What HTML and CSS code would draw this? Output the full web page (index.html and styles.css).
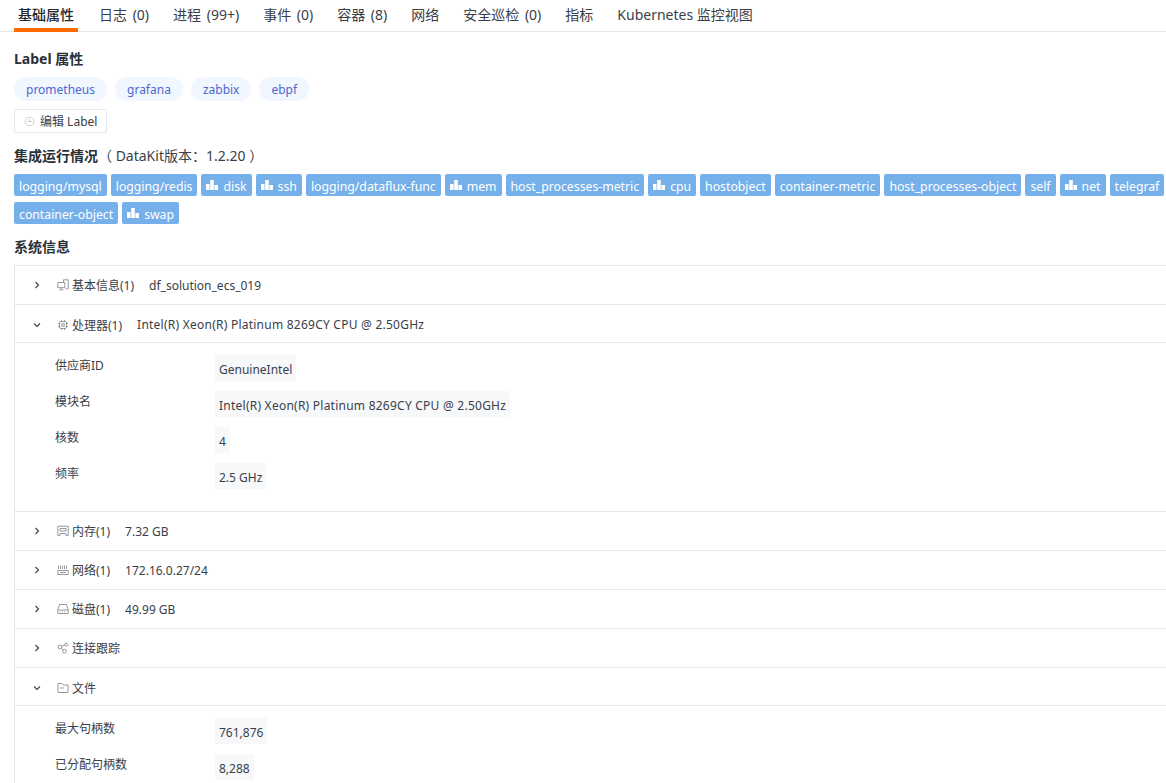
FILE: index.html
```html
<!DOCTYPE html>
<html lang="zh-CN">
<head>
    <meta charset="UTF-8">
    <meta name="viewport" content="width=device-width, initial-scale=1.0">
    <title>基础属性</title>
    <link rel="stylesheet" href="styles.css">
</head>
<body>
    <nav class="tabs">
        <a class="tab active">基础属性</a>
        <a class="tab tab-count">日志 (0)</a>
        <a class="tab tab-count">进程 (99+)</a>
        <a class="tab tab-count">事件 (0)</a>
        <a class="tab tab-count">容器 (8)</a>
        <a class="tab">网络</a>
        <a class="tab tab-count">安全巡检 (0)</a>
        <a class="tab">指标</a>
        <a class="tab">Kubernetes 监控视图</a>
    </nav>

    <main class="content">
        <h3 class="title title-label">Label 属性</h3>
        <div class="labels">
            <span class="label">prometheus</span>
            <span class="label">grafana</span>
            <span class="label">zabbix</span>
            <span class="label">ebpf</span>
        </div>
        <button class="edit-label">
            <svg class="edit-icon" viewBox="0 0 12 12"><circle cx="6" cy="6" r="4.800"/><path d="M3.600 6h4.800M6 3.600v2.400"/></svg>
            编辑 Label
        </button>

        <h3 class="title title-run">集成运行情况<span class="version">（ DataKit版本：1.2.20 ）</span></h3>
        <div class="inputs">
            <span class="input">logging/mysql</span>
            <span class="input">logging/redis</span>
            <span class="input"><svg class="bars" viewBox="0 0 12 12"><path d="M0 5h3.600v6H0zM4.200 1h3.600v10H4.200zM8.400 6H12v5H8.400z"/></svg>disk</span>
            <span class="input"><svg class="bars" viewBox="0 0 12 12"><path d="M0 5h3.600v6H0zM4.200 1h3.600v10H4.200zM8.400 6H12v5H8.400z"/></svg>ssh</span>
            <span class="input">logging/dataflux-func</span>
            <span class="input"><svg class="bars" viewBox="0 0 12 12"><path d="M0 5h3.600v6H0zM4.200 1h3.600v10H4.200zM8.400 6H12v5H8.400z"/></svg>mem</span>
            <span class="input">host_processes-metric</span>
            <span class="input"><svg class="bars" viewBox="0 0 12 12"><path d="M0 5h3.600v6H0zM4.200 1h3.600v10H4.200zM8.400 6H12v5H8.400z"/></svg>cpu</span>
            <span class="input">hostobject</span>
            <span class="input">container-metric</span>
            <span class="input">host_processes-object</span>
            <span class="input">self</span>
            <span class="input"><svg class="bars" viewBox="0 0 12 12"><path d="M0 5h3.600v6H0zM4.200 1h3.600v10H4.200zM8.400 6H12v5H8.400z"/></svg>net</span>
            <span class="input">telegraf</span>
            <span class="input">container-object</span>
            <span class="input"><svg class="bars" viewBox="0 0 12 12"><path d="M0 5h3.600v6H0zM4.200 1h3.600v10H4.200zM8.400 6H12v5H8.400z"/></svg>swap</span>
        </div>

        <h3 class="title title-sys">系统信息</h3>
        <section class="panel">
            <div class="row">
                <svg class="caret" viewBox="0 0 8 8"><path d="M2.500 1l3 3-3 3"/></svg>
                <svg class="row-icon" viewBox="0 0 12 12"><path d="M6.500 3.500V.8h4.700v9H8.500M.8 3.500h7v5.200h-7zM2.300 10.800h4M4.300 8.700v2.100"/></svg>
                <span class="row-name">基本信息(1)</span>
                <span class="row-value">df_solution_ecs_019</span>
            </div>
            <div class="row row-open">
                <svg class="caret" viewBox="0 0 8 8"><path d="M1 2.500l3 3 3-3"/></svg>
                <svg class="row-icon" viewBox="0 0 12 12"><rect x="2.500" y="2.500" width="7" height="7" rx="1.500"/><rect x="4.800" y="4.800" width="2.400" height="2.400"/><path d="M4.500 1v1.500M7.500 1v1.500M4.500 9.500V11M7.500 9.500V11M1 4.500h1.500M1 7.500h1.500M9.500 4.500H11M9.500 7.500H11"/></svg>
                <span class="row-name">处理器(1)</span>
                <span class="row-value text-long">Intel(R) Xeon(R) Platinum 8269CY CPU @ 2.50GHz</span>
            </div>
            <dl class="detail">
                <div class="item"><dt>供应商ID</dt><dd>GenuineIntel</dd></div>
                <div class="item"><dt>模块名</dt><dd class="text-long">Intel(R) Xeon(R) Platinum 8269CY CPU @ 2.50GHz</dd></div>
                <div class="item"><dt>核数</dt><dd>4</dd></div>
                <div class="item"><dt>频率</dt><dd>2.5 GHz</dd></div>
            </dl>
            <div class="row">
                <svg class="caret" viewBox="0 0 8 8"><path d="M2.500 1l3 3-3 3"/></svg>
                <svg class="row-icon" viewBox="0 0 12 12"><path d="M.8 1.200h10.400v9.300H9V8.500H3v2H.8zM3 3.500h6v2.500H3z"/></svg>
                <span class="row-name">内存(1)</span>
                <span class="row-value">7.32 GB</span>
            </div>
            <div class="row">
                <svg class="caret" viewBox="0 0 8 8"><path d="M2.500 1l3 3-3 3"/></svg>
                <svg class="row-icon" viewBox="0 0 12 12"><path d="M.8 6.500h10.400v4H.8zM1.500 1.500v3.500M3.500 1.500v3.500M5.500 1.500v3.500M7.500 1.500v3.500M9.500 1.500v3.500M3 8.500h6"/></svg>
                <span class="row-name">网络(1)</span>
                <span class="row-value">172.16.0.27/24</span>
            </div>
            <div class="row">
                <svg class="caret" viewBox="0 0 8 8"><path d="M2.500 1l3 3-3 3"/></svg>
                <svg class="row-icon" viewBox="0 0 12 12"><path d="M2.500 1.500h7L11.200 7v3.500H.8V7zM.8 7h10.400M3 8.800h.8M5 8.800h.8M7 8.800h.8"/></svg>
                <span class="row-name">磁盘(1)</span>
                <span class="row-value">49.99 GB</span>
            </div>
            <div class="row">
                <svg class="caret" viewBox="0 0 8 8"><path d="M2.500 1l3 3-3 3"/></svg>
                <svg class="row-icon" viewBox="0 0 12 12"><circle cx="3" cy="5" r="1.900"/><circle cx="9.200" cy="2.600" r="1.500"/><circle cx="7.500" cy="9.200" r="1.900"/><path d="M4.700 4.300l3.200-1.200M4.300 6.300l2 1.700"/></svg>
                <span class="row-name">连接跟踪</span>
            </div>
            <div class="row row-open">
                <svg class="caret" viewBox="0 0 8 8"><path d="M1 2.500l3 3 3-3"/></svg>
                <svg class="row-icon" viewBox="0 0 12 12"><path d="M1 1.500h4l1 1.500h5v7.500H1zM3 6h4"/></svg>
                <span class="row-name">文件</span>
            </div>
            <dl class="detail">
                <div class="item"><dt>最大句柄数</dt><dd>761,876</dd></div>
                <div class="item"><dt>已分配句柄数</dt><dd>8,288</dd></div>
            </dl>
        </section>
    </main>
</body>
</html>
```

FILE: styles.css
```css
html{
    font-family: "Noto Sans", "Noto Sans CJK SC", sans-serif;
    overflow: hidden;
    height: 100%;
}

*,
*:before,
*:after{
    box-sizing: border-box;
}

body{
    margin: 0;
    color: #2a3038;
    background: #fff;
    height: 783px;
    overflow: hidden;
}

.tabs{
    display: flex;
    height: 32px;
    padding-left: 14px;
    gap: 16px;
    border-bottom: 1px solid #e4e6ea;
}

.tab{
    height: 32px;
    padding: 4px 4px 0;
    font-size: 14px;
    line-height: 22px;
    color: #3a4048;
    white-space: nowrap;
}

.tab-count{
    word-spacing: 2px;
}

.tab.active{
    margin-right: 1px;
    color: #23282e;
    font-weight: 500;
    border-bottom: 4px solid #ff6a00;
}

.content{
    padding: 0 0 0 14px;
}

.title{
    margin: 0;
    font-size: 14px;
    font-weight: 700;
    line-height: 18px;
    color: #2a3038;
}

.title-label{
    margin-top: 18px;
}

.labels{
    display: flex;
    gap: 8px;
    margin-top: 9px;
}

.label{
    height: 24px;
    padding: 0 12px;
    border-radius: 12px;
    background: #f1f7ff;
    color: #4c67cf;
    font-size: 12px;
    line-height: 26px;
}

.edit-label{
    display: flex;
    align-items: center;
    gap: 5px;
    height: 24px;
    width: 93px;
    margin-top: 8px;
    padding: 0 0 0 9px;
    background: #fff;
    border: 1px solid #e4e6ea;
    border-radius: 2px;
    font: inherit;
    font-size: 12px;
    color: #3a4048;
}

.edit-icon{
    width: 11px;
    height: 11px;
    fill: none;
    stroke: #c4c8cd;
    stroke-width: 1;
}

.title-run{
    margin-top: 14px;
}

.version{
    font-weight: 400;
    color: #3a4048;
}

.inputs{
    display: flex;
    flex-wrap: wrap;
    gap: 6px 4px;
    margin-top: 9px;
}

.input{
    display: flex;
    align-items: center;
    height: 22px;
    padding: 2px 5px 0;
    border-radius: 2px;
    background: #76b0ea;
    color: #fff;
    font-size: 12.25px;
    white-space: nowrap;
}

.bars{
    width: 12px;
    height: 12px;
    margin-top: -2px;
    margin-right: 5px;
    fill: #fff;
}

.title-sys{
    margin-top: 14px;
}

.panel{
    margin-top: 9px;
    border-top: 1px solid #e4e6ea;
    border-left: 1px solid #e4e6ea;
}

.row{
    display: flex;
    align-items: center;
    height: 39px;
    border-bottom: 1px solid #e4e6ea;
    font-size: 12px;
    color: #3a4048;
    white-space: nowrap;
}

.row-open{
    height: 38px;
    padding-top: 2px;
}

.caret{
    width: 8px;
    height: 8px;
    margin-left: 18px;
    fill: none;
    stroke: #3a4048;
    stroke-width: 1.1;
}

.row-icon{
    width: 12px;
    height: 12px;
    margin-left: 16px;
    fill: none;
    stroke: #8a8f96;
    stroke-width: .9;
}

.row-name{
    margin-left: 3px;
}

.row-value{
    margin-left: 15px;
}

.text-long{
    letter-spacing: .24px;
}

.detail{
    margin: 0;
    padding: 12px 0 22px;
    border-bottom: 1px solid #e4e6ea;
}

.detail:last-child{
    border-bottom: none;
}

.item{
    display: flex;
    margin-bottom: 10px;
    font-size: 12px;
    line-height: 26px;
    color: #3a4048;
}

.item:last-child{
    margin-bottom: 0;
}

.item dt{
    width: 160px;
    margin-left: 40px;
    line-height: 22px;
}

.item dd{
    height: 26px;
    margin: 0;
    padding: 2px 4px 0;
    background: #f7f8fa;
}
```
